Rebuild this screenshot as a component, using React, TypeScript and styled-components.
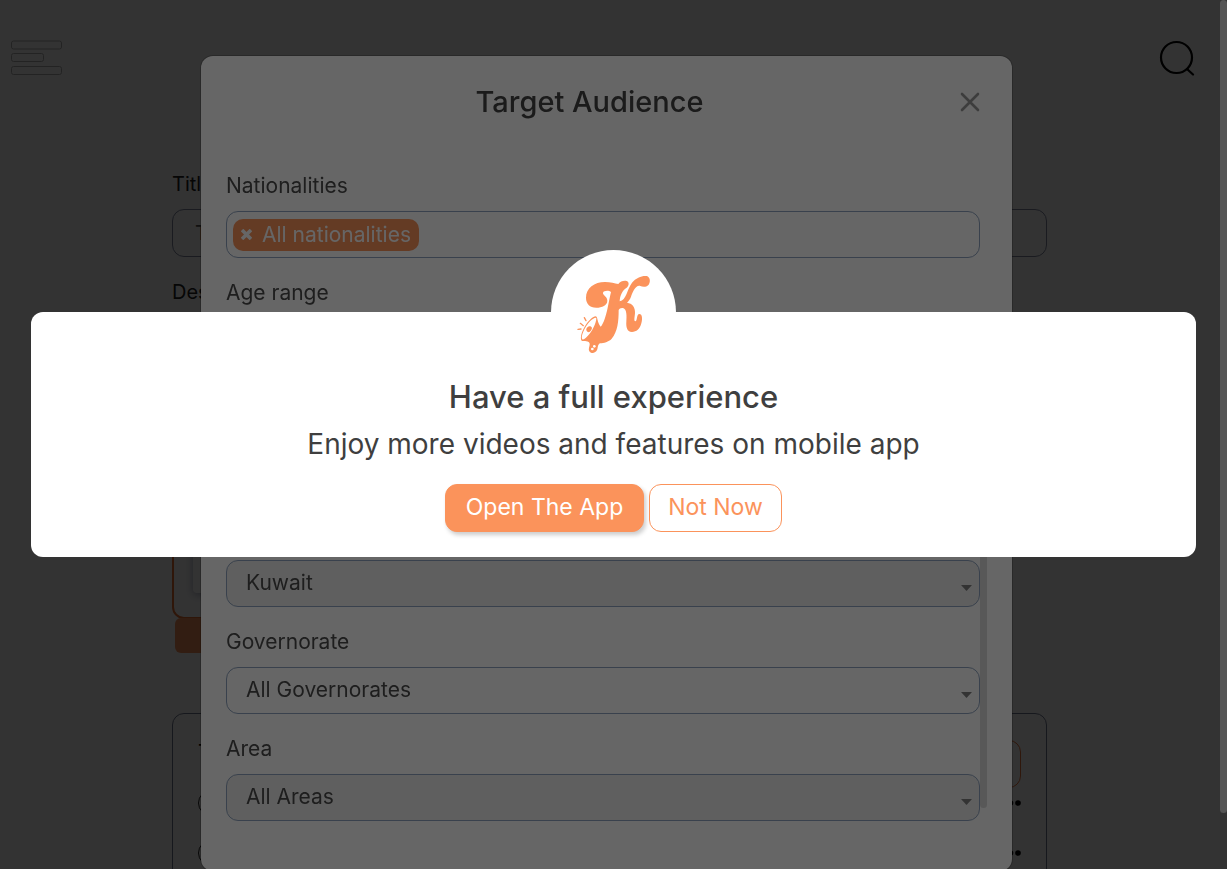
import React from "react";
import styled, { createGlobalStyle } from "styled-components";

const GlobalStyle = createGlobalStyle`
  *, *::before, *::after { box-sizing: border-box; }
  html, body { margin: 0; height: 100%; overflow: hidden; background: #fff; }
  body, button, input, select { font-family: Inter, "Open Sans", sans-serif; }
`;

const ORANGE = "#fb935b";
const BORDER = "#90a4c0";

const Page = styled.div`
  height: 100vh;
  overflow: hidden;
  padding-right: 8px;
`;

const Header = styled.header`
  display: flex;
  justify-content: space-between;
  padding: 39px 24px 0 10px;
`;

const IconButton = styled.button`
  display: block;
  padding: 0;
  border: 0;
  background: none;
  line-height: 0;
`;

const Main = styled.main`
  width: 90%;
  max-width: 875px;
  margin: 93px auto 0;
`;

const PageLabel = styled.label`
  display: block;
  height: 39px;
  line-height: 28px;
  font-size: 20px;
  color: #222;
`;

const PageInput = styled.input`
  display: block;
  width: 100%;
  height: 48px;
  padding: 0 22px;
  border: 1px solid #8088a0;
  border-radius: 12px;
  background: transparent;
  font-size: 20px;
  margin-bottom: 21px;
  &::placeholder { color: #555; opacity: 1; }
`;

const Upload = styled.div`
  display: flex;
  align-items: flex-end;
  width: 220px;
  height: 302px;
  padding: 0 19px 24px;
  border: 2px solid #e86f30;
  border-radius: 12px;
`;

const Preview = styled.div`
  flex: 1;
  height: 60px;
  border-radius: 4px;
  box-shadow: 0 2px 8px rgba(40, 50, 100, 0.4);
  background: #fff;
`;

const UploadButton = styled.button`
  display: block;
  width: 214px;
  height: 35px;
  margin: -1px 0 60px 3px;
  border: 0;
  border-radius: 6px;
  background: ${ORANGE};
`;

const Plans = styled.section`
  height: 300px;
  padding: 26px 25px;
  border: 1px solid #707890;
  border-radius: 12px;
`;

const PlansHead = styled.div`
  display: flex;
  justify-content: space-between;
  color: #000;
  font-size: 20px;
`;

const OutlineButton = styled.button`
  width: 120px;
  height: 48px;
  border: 1px solid #e8743a;
  border-radius: 12px;
  background: none;
`;

const PlanRow = styled.div`
  display: flex;
  align-items: center;
  justify-content: space-between;
  height: 30px;
  margin-bottom: 20px;
`;

const PlanRadio = styled.input`
  appearance: none;
  width: 26px;
  height: 26px;
  margin: 0;
  border: 1px solid #222;
  border-radius: 50%;
`;

const Overlay = styled.div<{ $shade: number }>`
  position: fixed;
  inset: 0;
  display: flex;
  justify-content: center;
  background: rgba(0, 0, 0, ${(p) => p.$shade});
`;

const ModalLayer = styled(Overlay)`
  align-items: flex-start;
  padding: 56px 14px 0 0;
`;

const Modal = styled.section`
  width: 90%;
  max-width: 811px;
  padding: 24px 25px 50px;
  border-radius: 12px;
  background: #fff;
  box-shadow: 0 0 0 1px rgba(0, 0, 0, 0.2);
  color: #4c4c4c;
`;

const ModalHead = styled.div`
  display: grid;
  grid-template-columns: 1fr 34px;
  align-items: center;
  justify-items: center;
  margin-bottom: 47px;
`;

const ModalTitle = styled.h2`
  margin: 0;
  font-size: 29px;
  line-height: 44px;
  font-weight: 500;
  color: #444;
`;

const ModalBody = styled.div`
  display: flex;
`;

const Fields = styled.div`
  flex: 1;
  display: grid;
  gap: 20px;
`;

const Field = styled.div`
  display: flex;
  flex-direction: column;
`;

const Label = styled.label`
  height: 40px;
  padding-top: 3px;
  font-size: 21px;
  line-height: 24px;
`;

const TagBox = styled.div`
  display: flex;
  align-items: center;
  height: 47px;
  padding: 0 6px;
  border: 1px solid ${BORDER};
  border-radius: 12px;
`;

const Tag = styled.button`
  display: flex;
  align-items: center;
  gap: 10px;
  height: 32px;
  padding: 0 8px;
  border: 0;
  border-radius: 10px;
  background: ${ORANGE};
  color: #fff;
  font-size: 21px;
`;

const AgeField = styled(Field)`
  height: 222px;
`;

const SelectWrap = styled.div`
  display: grid;
  align-items: center;
  & > * { grid-area: 1 / 1; }
  & > svg { justify-self: end; margin: 8px 8px 0 0; pointer-events: none; }
`;

const Select = styled.select<{ $muted?: boolean }>`
  appearance: none;
  width: 100%;
  height: 47px;
  padding: 0 19px 2px;
  border: 1px solid ${BORDER};
  border-radius: 12px;
  background: ${(p) => (p.$muted ? "#eee" : "#fff")};
  color: #4c4c4c;
  font-size: 21px;
`;

const BodyScroll = styled.div`
  display: flex;
  flex-direction: column;
  justify-content: flex-end;
  width: 7px;
  padding-bottom: 13px;
`;

const Thumb = styled.div`
  height: 60%;
  border-radius: 4px;
  background: #dcdcdc;
`;

const PageScroll = styled.div`
  position: fixed;
  top: 0;
  right: 0;
  bottom: 56px;
  width: 7px;
  border-radius: 4px;
  background: #555;
`;

const PromptLayer = styled(Overlay)`
  align-items: center;
  padding: 0 31px;
`;

const Prompt = styled.section`
  position: relative;
  flex: 1;
  padding: 62px 20px 25px;
  border-radius: 12px;
  background: #fff;
  text-align: center;
`;

const LogoCircle = styled.div`
  position: absolute;
  top: -62px;
  left: 50%;
  display: flex;
  justify-content: center;
  width: 125px;
  height: 125px;
  margin-left: -63px;
  padding: 25px 0 0 2px;
  border-radius: 50%;
  background: #fff;
`;

const PromptTitle = styled.h1`
  margin: 0;
  font-size: 31px;
  line-height: 46px;
  font-weight: 500;
  color: #3f3f3f;
`;

const PromptText = styled.p`
  margin: 0 0 16px;
  font-size: 28px;
  line-height: 48px;
  color: #3f3f3f;
`;

const Actions = styled.div`
  display: flex;
  justify-content: center;
  gap: 5px;
`;

const Action = styled.button<{ $primary?: boolean }>`
  height: 48px;
  width: ${(p) => (p.$primary ? 199 : 133)}px;
  padding: 0 0 2px;
  border: 1px solid ${ORANGE};
  border-radius: 12px;
  background: ${(p) => (p.$primary ? ORANGE : "#fff")};
  color: ${(p) => (p.$primary ? "#fff" : ORANGE)};
  box-shadow: ${(p) => (p.$primary ? "2px 3px 4px rgba(0, 0, 0, 0.2)" : "none")};
  font-size: 23px;
  white-space: nowrap;
`;

const MenuIcon = () => (
  <svg width="52" height="38" viewBox="0 0 52 38" fill="#fff" stroke="#b0b0b0" strokeWidth="1">
    <rect x="1.5" y="2" width="50" height="8" rx="2" />
    <rect x="1.5" y="14.500" width="32" height="8" rx="2" />
    <rect x="1.5" y="27.500" width="50" height="8" rx="2" />
  </svg>
);

const SearchIcon = () => (
  <svg width="36" height="36" viewBox="0 0 36 36" fill="none" stroke="#000" strokeWidth="2.200" strokeLinecap="round">
    <circle cx="17.5" cy="17.5" r="15.5" />
    <path d="M28 29l6 5.500" />
  </svg>
);

const DotsIcon = () => (
  <svg width="26" height="6" viewBox="0 0 26 6">
    <circle cx="7" cy="3" r="2.8" />
    <circle cx="15.5" cy="3" r="2.8" />
    <circle cx="23" cy="3" r="2.8" />
  </svg>
);

const Arrow = () => (
  <svg width="11" height="6" viewBox="0 0 11 6">
    <path d="M0 0h11l-5.500 6z" fill="#808080" />
  </svg>
);

const Logo = () => (
  <svg width="74" height="79" viewBox="110 105 222 237" fill={ORANGE}>
    <path d="M168 203C148 203 137 191 137 173C137 144 162 126 194 126C211 126 223 131 234 132C240 124 250 121 259 123C268 127 266 138 258 144C246 152 239 166 238 184C258 181 260 148 275 128C287 113 306 106 319 108C330 111 331 126 325 134C317 143 306 141 300 138C285 134 277 158 272 170C269 178 264 184 260 188C276 190 285 202 284 219C283 233 280 243 285 244C291 244 288 225 296 222C306 221 307 236 303 250C299 267 288 276 275 276C259 276 257 258 258 245C259 229 260 207 248 204C242 203 237 205 235 210C235 244 232 275 214 296C205 306 190 309 180 310C172 312 173 322 171 328C168 337 160 340 154 339C147 337 144 330 146 323C148 316 150 310 145 306C138 302 131 303 125 303C119 298 122 282 129 268C139 247 156 229 167 229C173 233 170 247 181 260C190 251 197 226 202 203C206 185 209 168 212 156C206 150 190 151 188 158C187 166 201 169 201 182C201 196 185 203 168 203Z" />
    <path d="M126 298C120 290 133 261 149 244C159 234 167 231 168 235C168 249 155 277 139 291C134 296 129 300 126 298Z" fill="#fff" />
    <path d="M145 277C139 276 136 269 139 264C145 257 153 258 155 264C154 270 150 275 145 277Z" />
    <circle cx="162" cy="319" r="4" fill="#fff" />
    <circle cx="156" cy="327" r="4" fill="#fff" />
    <g fill="none" stroke={ORANGE} strokeWidth="4" strokeLinecap="round">
      <path d="M113 268l9-1" />
      <path d="M120 250l9 7" />
      <path d="M132 233l5 9" />
    </g>
  </svg>
);

type SelectFieldProps = { id: string; label: string; value: string; muted?: boolean };

const SelectField = ({ id, label, value, muted }: SelectFieldProps) => (
  <Field>
    <Label htmlFor={id}>{label}</Label>
    <SelectWrap>
      <Select id={id} $muted={muted}>
        <option>{value}</option>
      </Select>
      <Arrow />
    </SelectWrap>
  </Field>
);

export default function App() {
  return (
    <>
      <GlobalStyle />
      <Page>
        <Header>
          <IconButton aria-label="Menu"><MenuIcon /></IconButton>
          <IconButton aria-label="Search"><SearchIcon /></IconButton>
        </Header>
        <Main>
          <PageLabel htmlFor="title">Title</PageLabel>
          <PageInput id="title" placeholder="T" />
          <PageLabel as="div">Des.</PageLabel>
          <Upload><Preview /></Upload>
          <UploadButton aria-label="Upload" />
          <Plans>
            <PlansHead>
              <span>T</span>
              <OutlineButton aria-label="Add" />
            </PlansHead>
            <PlanRow><PlanRadio type="radio" name="plan" aria-label="First audience" /><DotsIcon /></PlanRow>
            <PlanRow><PlanRadio type="radio" name="plan" aria-label="Second audience" /><DotsIcon /></PlanRow>
          </Plans>
        </Main>
      </Page>

      <ModalLayer $shade={0.5}>
        <Modal role="dialog" aria-labelledby="modal-title">
          <ModalHead>
            <ModalTitle id="modal-title">Target Audience</ModalTitle>
            <IconButton aria-label="Close">
              <svg width="20" height="20" viewBox="0 0 20 20" stroke="#999" strokeWidth="2.600" strokeLinecap="round">
                <path d="M2 2l16 16M18 2L2 18" />
              </svg>
            </IconButton>
          </ModalHead>
          <ModalBody>
            <Fields>
              <Field>
                <Label as="div">Nationalities</Label>
                <TagBox>
                  <Tag>
                    <svg width="11" height="11" viewBox="0 0 11 11" stroke="#fff" strokeWidth="3.600">
                      <path d="M1 1l9 9M10 1l-9 9" />
                    </svg>
                    All nationalities
                  </Tag>
                </TagBox>
              </Field>
              <AgeField>
                <Label htmlFor="age">Age range</Label>
                <input id="age" type="range" />
              </AgeField>
              <SelectField id="country" label="Country" value="Kuwait" muted />
              <SelectField id="governorate" label="Governorate" value="All Governorates" />
              <SelectField id="area" label="Area" value="All Areas" muted />
            </Fields>
            <BodyScroll><Thumb /></BodyScroll>
          </ModalBody>
        </Modal>
      </ModalLayer>

      <PromptLayer $shade={0.6}>
        <Prompt role="dialog" aria-labelledby="prompt-title">
          <LogoCircle><Logo /></LogoCircle>
          <PromptTitle id="prompt-title">Have a full experience</PromptTitle>
          <PromptText>Enjoy more videos and features on mobile app</PromptText>
          <Actions>
            <Action $primary>Open The App</Action>
            <Action>Not Now</Action>
          </Actions>
        </Prompt>
      </PromptLayer>

      <PageScroll />
    </>
  );
}
